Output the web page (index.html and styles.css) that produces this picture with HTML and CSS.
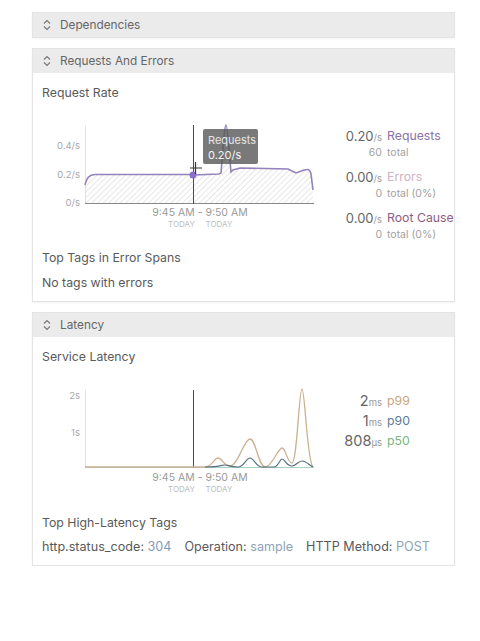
FILE: index.html
```html
<!DOCTYPE html>
<html>
<head>
<meta charset="utf-8">
<link rel="stylesheet" href="styles.css">
</head>
<body>
<div class="page">
  <section class="card">
    <header class="card-head">
      <svg class="chev" width="8" height="12" viewBox="0 0 8 12"><path d="M1 4.5 L4 1.5 L7 4.5 M1 7.5 L4 10.5 L7 7.5" fill="none" stroke="#7a7a7a" stroke-width="1.2"/></svg>
      <span>Dependencies</span>
    </header>
  </section>

  <section class="card">
    <header class="card-head">
      <svg class="chev" width="8" height="12" viewBox="0 0 8 12"><path d="M1 4.5 L4 1.5 L7 4.5 M1 7.5 L4 10.5 L7 7.5" fill="none" stroke="#7a7a7a" stroke-width="1.2"/></svg>
      <span>Requests And Errors</span>
    </header>
    <div class="card-body">
      <div class="title">Request Rate</div>
      <div class="chart-row req-row">
        <svg class="chart" width="280" height="131" viewBox="42 103 280 131">
          <defs>
            <pattern id="hatch" width="4" height="4" patternUnits="userSpaceOnUse" patternTransform="rotate(45)">
              <line x1="0" y1="0" x2="0" y2="4" stroke="#cfcfcf" stroke-width="1"/>
            </pattern>
          </defs>
          <text class="ylab" x="80" y="149">0.4/s</text>
          <text class="ylab" x="80" y="178">0.2/s</text>
          <text class="ylab" x="80" y="206">0/s</text>
          <line x1="85.5" y1="126" x2="85.5" y2="204" stroke="#e2e2e2"/>
          <path d="M85,185 C87,177 89,175 95,174.5 L190,174.5 L193,175 L219,174 L221,173 C223,150 224.5,125 226,125 C227.5,125 229,150 231,172 L233,170 L240,168 L288,169 L296,173 L304,170 C308,169 310,169 311,174 L313,190 L313,204 L85,204 Z" fill="url(#hatch)"/>
          <line x1="85" y1="203.5" x2="314" y2="203.5" stroke="#8a8a8a" stroke-width="1.2"/>
          <path d="M85,185 C87,177 89,175 95,174.5 L190,174.5 L193,175 L219,174 L221,173 C223,150 224.5,125 226,125 C227.5,125 229,150 231,172 L233,170 L240,168 L288,169 L296,173 L304,170 C308,169 310,169 311,174 L313,190" fill="none" stroke="#9482bd" stroke-width="1.6"/>
          <line x1="193.5" y1="125" x2="193.5" y2="204" stroke="#4a4a4a" stroke-width="1"/>
          <rect x="203" y="129" width="55" height="35" rx="2" fill="rgba(88,88,88,0.8)"/>
          <text class="tip1" x="208" y="144">Requests</text>
          <text class="tip2" x="208" y="159">0.20/s</text>
          <circle cx="193" cy="175" r="3.5" fill="#8a70c8"/>
          <path d="M190 168 H202 M195.5 162 V174" stroke="#333" stroke-width="1.2"/>
          <text class="xlab" x="200" y="216">9:45 AM - 9:50 AM</text>
          <text class="xday" x="181.5" y="227">TODAY</text>
          <text class="xday" x="219" y="227">TODAY</text>
        </svg>
        <div class="legend legend-req">
          <span class="val">0.20<small>/s</small></span><span class="lab c-req">Requests</span>
          <span class="sub">60</span><span class="sub">total</span>
          <span class="val gap">0.00<small>/s</small></span><span class="lab gap c-err">Errors</span>
          <span class="sub">0</span><span class="sub">total (0%)</span>
          <span class="val gap">0.00<small>/s</small></span><span class="lab gap c-root">Root Cause</span>
          <span class="sub">0</span><span class="sub">total (0%)</span>
        </div>
      </div>
      <div class="title sec">Top Tags in Error Spans</div>
      <div class="text">No tags with errors</div>
    </div>
  </section>

  <section class="card">
    <header class="card-head">
      <svg class="chev" width="8" height="12" viewBox="0 0 8 12"><path d="M1 4.5 L4 1.5 L7 4.5 M1 7.5 L4 10.5 L7 7.5" fill="none" stroke="#7a7a7a" stroke-width="1.2"/></svg>
      <span>Latency</span>
    </header>
    <div class="card-body">
      <div class="title">Service Latency</div>
      <div class="chart-row lat-row">
        <svg class="chart" width="280" height="130" viewBox="42 367 280 130">
          <text class="ylab" x="80" y="399">2s</text>
          <text class="ylab" x="80" y="436">1s</text>
          <line x1="85.5" y1="390" x2="85.5" y2="468" stroke="#e2e2e2"/>
          <line x1="85" y1="467.5" x2="314" y2="467.5" stroke="#a8d2c0" stroke-width="1.2"/>
          <line x1="193.5" y1="390" x2="193.5" y2="468" stroke="#4a4a4a" stroke-width="1"/>
          <path d="M85,467 L205,467 C212,467 214,458 218,458 C222,458 224,466 230,466 C238,466 244,439 250,439 C256,439 258,466 265,467 C272,467 278,448 282,448 C286,448 287,463 292,463 C297,463 299,389 302,389 C305,389 307,462 313,467" fill="none" stroke="#cbb091" stroke-width="1.3"/>
          <path d="M205,467 C220,467 222,465 225,465 C228,465 230,467 238,467 C244,467 246,458 250,458 C254,458 256,467 262,467 L274,467 C278,467 280,459 282,459 C285,459 286,466 292,466 C296,466 298,461 302,461 C306,461 309,465 313,467" fill="none" stroke="#56707e" stroke-width="1.2"/>
          <text class="xlab" x="200" y="481">9:45 AM - 9:50 AM</text>
          <text class="xday" x="181.5" y="492">TODAY</text>
          <text class="xday" x="219" y="492">TODAY</text>
        </svg>
        <div class="legend legend-lat">
          <span class="val big">2<small>ms</small></span><span class="lab c-p99">p99</span>
          <span class="val big">1<small>ms</small></span><span class="lab c-p90">p90</span>
          <span class="val big">808<small>µs</small></span><span class="lab c-p50">p50</span>
        </div>
      </div>
      <div class="title sec2">Top High-Latency Tags</div>
      <div class="tags">
        <span>http.status_code: <em class="c-v1">304</em></span>
        <span>Operation: <em class="c-v2">sample</em></span>
        <span>HTTP Method: <em class="c-v2">POST</em></span>
      </div>
    </div>
  </section>
</div>
</body>
</html>
```
FILE: styles.css
```css
* { box-sizing: border-box; }
html, body { margin: 0; padding: 0; background: #fff; }
body {
  font-family: Inter, "Noto Sans", sans-serif;
  font-size: 12.3px;
  color: #5a5a5a;
}
.page {
  padding: 12px 0 0 32px;
  width: 455px;
  display: flex;
  flex-direction: column;
  gap: 10px;
}
.card {
  border: 1px solid #e4e4e4;
  box-shadow: 0 1px 2px rgba(0,0,0,0.05);
  background: #fff;
}
.card-head {
  height: 24px;
  background: #ebebeb;
  display: flex;
  align-items: center;
  gap: 9px;
  padding-left: 10px;
  color: #666;
  font-size: 11.8px;
}
.chev { display: block; }
.card-body {
  padding: 10px 9px 8px 9px;
}
.title, .text, .tags {
  line-height: 20px;
  height: 20px;
  white-space: nowrap;
}
.sec { margin-top: 14px; }
.text { margin-top: 5px; }
.sec2 { margin-top: 16px; }
.tags { margin-top: 4px; display: flex; gap: 13px; font-size: 12.6px; }
.tags em { font-style: normal; }
.c-v1 { color: #7f9db8; }
.c-v2 { color: #8fa3b7; }
.chart-row { display: flex; align-items: flex-start; }
.req-row { height: 131px; }
.lat-row { height: 130px; }
.chart { display: block; flex: none; }
.ylab { font-size: 9.5px; fill: #a8a8a8; text-anchor: end; font-family: Inter, sans-serif; }
.xlab { font-size: 10.5px; fill: #9a9a9a; text-anchor: middle; font-family: Inter, sans-serif; }
.xday { font-size: 8px; fill: #bdbdbd; text-anchor: middle; font-family: Inter, sans-serif; }
.tip1 { font-size: 11px; fill: #e6e6e6; font-family: Inter, sans-serif; }
.tip2 { font-size: 11px; fill: #f4f4f4; font-family: Inter, sans-serif; }
.legend {
  display: grid;
  grid-template-columns: 60px auto;
  column-gap: 5px;
  align-content: start;
}
.legend-req { padding-top: 24px; }
.legend-lat { padding-top: 24px; }
.legend .val { text-align: right; color: #666; font-size: 13px; line-height: 18px; height: 18px; white-space: nowrap; }
.legend .val small { font-size: 9.5px; color: #999; line-height: 1; }
.legend .lab { font-size: 12.3px; line-height: 18px; height: 18px; white-space: nowrap; }
.legend .sub { font-size: 10.5px; color: #a2a2a2; line-height: 16px; height: 16px; white-space: nowrap; }
.legend .sub:nth-child(4n+3) { text-align: right; }
.legend .gap { margin-top: 7px; }
.legend-lat .val, .legend-lat .lab { line-height: 20px; height: 20px; }
.legend-lat .big { font-size: 14.5px; }
.c-req { color: #8c72a9; }
.c-err { color: #cfb3c3; }
.c-root { color: #8e5d83; }
.c-p99 { color: #c9a57c; }
.c-p90 { color: #5b7c93; }
.c-p50 { color: #79b679; }
```
